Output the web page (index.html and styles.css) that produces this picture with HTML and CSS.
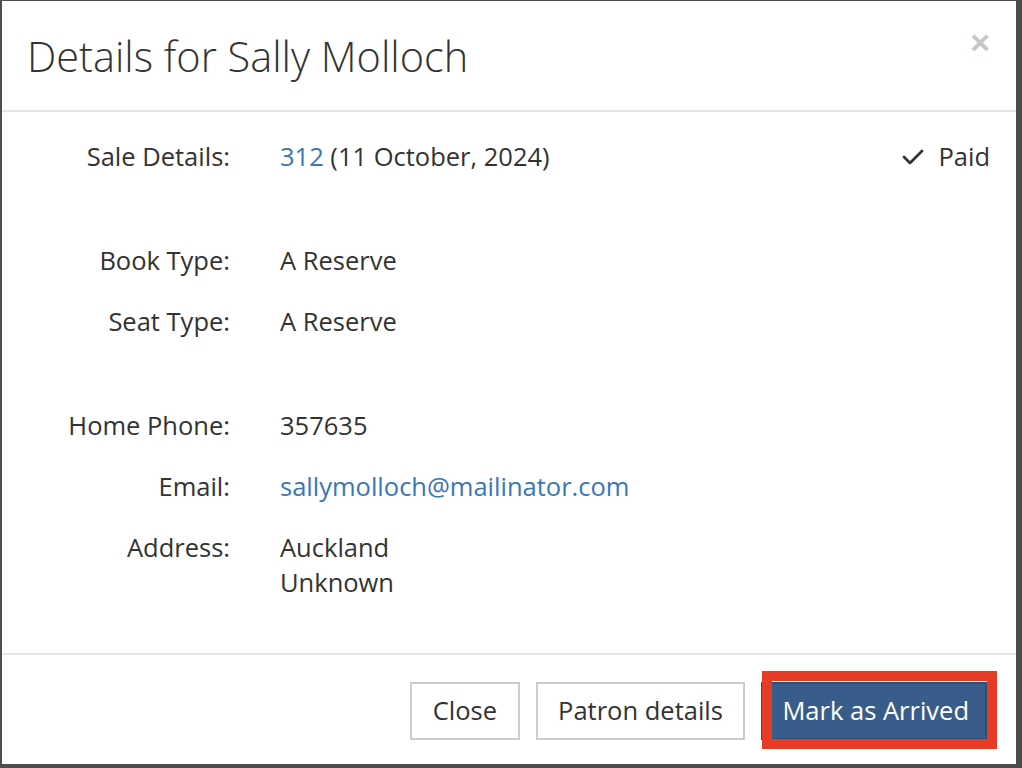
FILE: index.html
```html
<!DOCTYPE html>
<html>
<head>
<meta charset="utf-8">
<link rel="stylesheet" href="styles.css">
</head>
<body>
<div class="modal">
  <div class="modal-header">
    <h1 class="title">Details for Sally Molloch</h1>
    <span class="close">&times;</span>
  </div>
  <div class="modal-body">
    <div class="group">
      <div class="row">
        <div class="label">Sale Details:</div>
        <div class="value"><a class="link" href="#">312</a> (11 October, 2024)</div>
        <div class="status">
          <svg class="check" width="22" height="18" viewBox="0 0 22 18"><polyline points="2,9 8,15 20,3" fill="none" stroke="#333" stroke-width="2.8" stroke-linecap="round" stroke-linejoin="round"/></svg>
          <span>Paid</span>
        </div>
      </div>
    </div>
    <div class="group">
      <div class="row">
        <div class="label">Book Type:</div>
        <div class="value">A Reserve</div>
      </div>
      <div class="row">
        <div class="label">Seat Type:</div>
        <div class="value">A Reserve</div>
      </div>
    </div>
    <div class="group">
      <div class="row">
        <div class="label">Home Phone:</div>
        <div class="value">357635</div>
      </div>
      <div class="row">
        <div class="label">Email:</div>
        <div class="value"><a class="link" href="#">sallymolloch@mailinator.com</a></div>
      </div>
      <div class="row">
        <div class="label">Address:</div>
        <div class="value">Auckland<br>Unknown</div>
      </div>
    </div>
  </div>
  <div class="modal-footer">
    <button class="btn">Close</button>
    <button class="btn">Patron details</button>
    <span class="primary-wrap"><button class="btn btn-primary">Mark as Arrived</button><span class="highlight"></span></span>
  </div>
</div>
</body>
</html>
```

FILE: styles.css
```css
*, *::before, *::after {
  box-sizing: border-box;
}
html, body {
  margin: 0;
  padding: 0;
}
body {
  background: #4d4d4d;
  width: 1022px;
  height: 768px;
  overflow: hidden;
  font-family: "Open Sans", "Liberation Sans", sans-serif;
  color: #333;
}
.modal {
  margin: 1px 0 0 2px;
  width: 1014px;
  height: 763px;
  background: #fff;
  display: flex;
  flex-direction: column;
}
.modal-header {
  flex: none;
  display: flex;
  justify-content: space-between;
  align-items: flex-start;
  padding: 32px 26px 0 25px;
  height: 111px;
  border-bottom: 2px solid #e5e5e5;
}
.title {
  margin: 0;
  font-weight: 300;
  font-size: 41.5px;
  line-height: 46px;
  color: #333;
}
.close {
  font-family: "Liberation Sans", sans-serif;
  font-weight: 700;
  font-size: 34px;
  line-height: 20px;
  color: #c6c6c6;
  margin-top: -1px;
}
.modal-body {
  flex: 1 1 auto;
  min-height: 0;
  padding: 27px 26px 0 25px;
  font-size: 25.5px;
  line-height: 35px;
}
.group {
  display: flex;
  flex-direction: column;
  gap: 26px;
  margin-bottom: 69px;
}
.row {
  display: grid;
  grid-template-columns: 203px 1fr auto;
  column-gap: 50px;
}
.label {
  text-align: right;
}
.link {
  color: #3a77b5;
  text-decoration: none;
}
.status {
  display: flex;
  align-items: center;
  gap: 14px;
}
.check {
  display: block;
}
.modal-footer {
  flex: none;
  border-top: 2px solid #e5e5e5;
  display: flex;
  justify-content: flex-end;
  align-items: flex-start;
  padding: 27px 29px 0 0;
  height: 111px;
  gap: 16px;
}
.btn {
  font-family: "Open Sans", "Liberation Sans", sans-serif;
  font-size: 25.5px;
  height: 58px;
  padding: 0 20.5px;
  background: #fff;
  color: #333;
  border: 2px solid #ccc;
  border-radius: 0;
  line-height: 1;
}
.primary-wrap {
  position: relative;
  display: flex;
}
.btn-primary {
  background: #385d8a;
  border-color: #2e4f77;
  color: #fff;
  padding: 0 16px 0 19px;
}
.highlight {
  position: absolute;
  left: 1px;
  top: -11px;
  right: -10px;
  bottom: -9px;
  border: 10px solid #e63c26;
  pointer-events: none;
}
```
